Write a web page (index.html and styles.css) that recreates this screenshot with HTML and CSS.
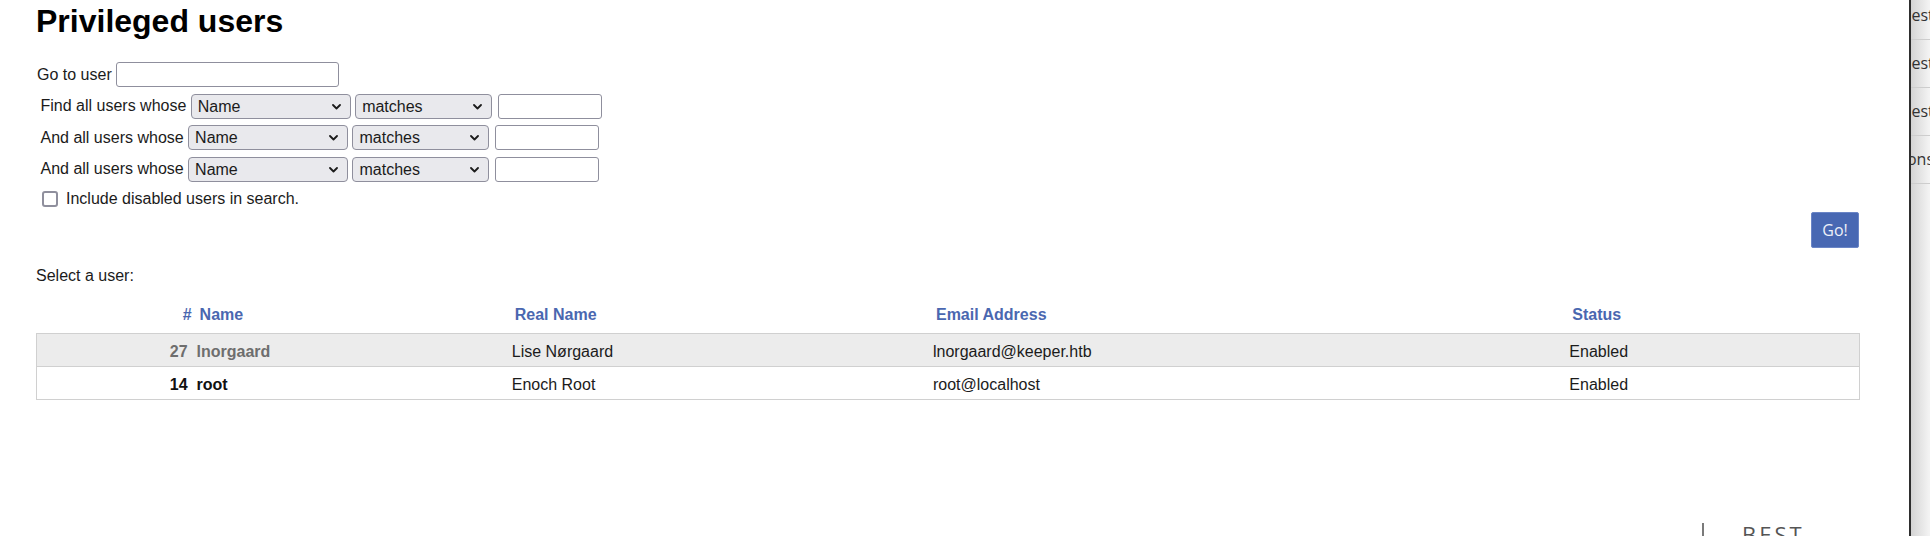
FILE: index.html
```html
<!DOCTYPE html>
<html lang="en">
<head>
<meta charset="utf-8">
<title>Privileged users</title>
<link rel="stylesheet" href="styles.css">
</head>
<body>
<div class="page">
  <h1 class="title">Privileged users</h1>
  <form class="search">
    <div class="goto">
      <label for="goto">Go to user</label>
      <input id="goto" class="text w-goto" type="text">
    </div>
    <div class="crit">
      <span class="crit-label">Find all users whose</span>
      <span class="sel w-field"><select><option>Name</option></select><svg viewBox="0 0 9 6"><path d="M1 1l3.5 3.5L8 1"/></svg></span>
      <span class="sel w-op"><select><option>matches</option></select><svg viewBox="0 0 9 6"><path d="M1 1l3.5 3.5L8 1"/></svg></span>
      <input class="text w-val" type="text">
    </div>
    <div class="crit">
      <span class="crit-label">And all users whose</span>
      <span class="sel w-field"><select><option>Name</option></select><svg viewBox="0 0 9 6"><path d="M1 1l3.5 3.5L8 1"/></svg></span>
      <span class="sel w-op"><select><option>matches</option></select><svg viewBox="0 0 9 6"><path d="M1 1l3.5 3.5L8 1"/></svg></span>
      <input class="text w-val" type="text">
    </div>
    <div class="crit">
      <span class="crit-label">And all users whose</span>
      <span class="sel w-field"><select><option>Name</option></select><svg viewBox="0 0 9 6"><path d="M1 1l3.5 3.5L8 1"/></svg></span>
      <span class="sel w-op"><select><option>matches</option></select><svg viewBox="0 0 9 6"><path d="M1 1l3.5 3.5L8 1"/></svg></span>
      <input class="text w-val" type="text">
    </div>
    <label class="check"><input type="checkbox" class="box"><span>Include disabled users in search.</span></label>
    <div class="actions"><button type="button" class="go">Go!</button></div>
  </form>

  <p class="select-label">Select a user:</p>

  <table class="users">
    <colgroup>
      <col class="c-num"><col class="c-name"><col class="c-real"><col class="c-email"><col class="c-status">
    </colgroup>
    <thead>
      <tr>
        <th class="num">#</th>
        <th>Name</th>
        <th>Real Name</th>
        <th>Email Address</th>
        <th>Status</th>
      </tr>
    </thead>
    <tbody>
      <tr class="odd">
        <td class="num muted">27</td>
        <td class="name muted">lnorgaard</td>
        <td>Lise Nørgaard</td>
        <td>lnorgaard@keeper.htb</td>
        <td>Enabled</td>
      </tr>
      <tr class="even">
        <td class="num">14</td>
        <td class="name">root</td>
        <td>Enoch Root</td>
        <td>root@localhost</td>
        <td>Enabled</td>
      </tr>
    </tbody>
  </table>

  <footer class="footer">
    <div class="brand"><span class="bar"></span><span class="best">BEST</span></div>
  </footer>
</div>

<nav class="sidemenu">
  <a class="item">Requests</a>
  <a class="item">Requests</a>
  <a class="item">Requests</a>
  <a class="item alt">Options</a>
</nav>
</body>
</html>
```

FILE: styles.css
```css
html, body {
  margin: 0;
  height: 536px;
  overflow: hidden;
  background: #fff;
}

body {
  position: relative;
  font-family: "Liberation Sans", Arial, sans-serif;
  font-size: 16px;
  color: #1b1b1b;
}

.page {
  padding: 0 70px 0 36px;
}

.title {
  margin: 3px 0 0;
  font-size: 32px;
  line-height: 37px;
  font-weight: bold;
  color: #000;
}

.search {
  margin-top: 22px;
  display: flex;
  flex-direction: column;
}

.goto {
  display: flex;
  align-items: center;
  gap: 4.4px;
  height: 25px;
  padding-left: 1px;
}

.crit {
  display: flex;
  align-items: center;
  gap: 4.4px;
  height: 25px;
  margin-top: 6.6px;
  padding-left: 4.5px;
}

.text {
  box-sizing: border-box;
  height: 25px;
  margin: 0;
  padding: 0 4px;
  border: 1px solid #8f8f9d;
  border-radius: 3px;
  background: #fff;
  font: 16px "Liberation Sans", Arial, sans-serif;
}

.w-goto { width: 223px; }
.w-val { width: 104px; margin-left: 1.6px; }

.sel {
  position: relative;
  display: inline-block;
  height: 25px;
}

.sel select {
  -webkit-appearance: none;
  appearance: none;
  box-sizing: border-box;
  width: 100%;
  height: 25px;
  margin: 0;
  padding: 0 0 0 6px;
  border: 1px solid #8f8f9d;
  border-radius: 4px;
  background: #e9e9ed;
  font: 16px "Liberation Sans", Arial, sans-serif;
  color: #1b1b1b;
}

.sel svg {
  position: absolute;
  right: 10px;
  top: 10px;
  width: 9px;
  height: 6px;
  pointer-events: none;
  fill: none;
  stroke: #1b1b1b;
  stroke-width: 1.8;
  stroke-linecap: round;
  stroke-linejoin: round;
}

.w-field { width: 160px; }
.w-op { width: 137px; }

.check {
  display: flex;
  align-items: center;
  gap: 8px;
  height: 18px;
  margin-top: 8px;
  padding-left: 6px;
}

.box {
  -webkit-appearance: none;
  appearance: none;
  box-sizing: border-box;
  width: 16px;
  height: 16px;
  margin: 0;
  border: 2px solid #8f8f9d;
  border-radius: 3px;
  background: #fff;
}

.actions {
  display: flex;
  justify-content: flex-end;
  margin-top: 4px;
}

.go {
  box-sizing: border-box;
  width: 48px;
  height: 36px;
  margin-right: 1px;
  border: 1px solid #6a85c6;
  border-radius: 2px;
  background: #4868b3;
  color: #eef1f9;
  font: 16px "Open Sans", "Noto Sans", sans-serif;
  padding: 0;
}

.select-label {
  margin: 19px 0 0;
  line-height: 18px;
}

.users {
  margin-top: 12px;
  width: 1824px;
  table-layout: fixed;
  border-collapse: collapse;
}

.c-num { width: 155px; }
.c-name { width: 315px; }
.c-real { width: 421px; }
.c-email { width: 636px; }
.c-status { width: 295px; }

.users th {
  height: 36px;
  padding: 0 0 0 8px;
  text-align: left;
  vertical-align: middle;
  font-weight: bold;
  color: #4a67b0;
}

.users th.num {
  text-align: right;
  padding: 0;
}

.users td {
  padding: 9px 0 5px 5px;
  line-height: 18px;
  border-top: 1px solid #d0d0d0;
  border-bottom: 1px solid #d0d0d0;
  white-space: nowrap;
}

.users td:first-child { border-left: 1px solid #d0d0d0; }
.users td:last-child { border-right: 1px solid #d0d0d0; }

.users td.num {
  text-align: right;
  padding-right: 4px;
  padding-left: 0;
  font-weight: bold;
}

.users td.name { font-weight: bold; }

.users tr.odd td { background: #ececec; }
.users tr.even td { background: #fff; }

.users td.muted { color: #6e6e6e; }
.users tr.even td.num,
.users tr.even td.name { color: #111; }

.footer {
  display: flex;
  justify-content: flex-end;
  margin-top: 123px;
}

.brand {
  width: 158px;
  display: flex;
  align-items: flex-start;
}

.bar {
  width: 2px;
  height: 20px;
  background: #7a7a7a;
  margin-right: 38px;
}

.best {
  font: 22px/1 "Open Sans", "Noto Sans", sans-serif;
  letter-spacing: 3px;
  color: #555;
}

.sidemenu {
  position: absolute;
  top: -8px;
  left: 1909px;
  width: 200px;
  height: 560px;
  border-left: 2px solid #2e2e2e;
  background: linear-gradient(to right, #d4d4d4, #f3f3f3 18px, #f6f6f6);
  overflow: hidden;
  font: 16px "Open Sans", "Noto Sans", sans-serif;
  color: #333;
}

.sidemenu .item {
  display: block;
  height: 47px;
  line-height: 47px;
  border-bottom: 1px solid #cdcdcd;
  white-space: nowrap;
  text-indent: -38px;
}

.sidemenu .item.alt {
  text-indent: -36px;
}
```
